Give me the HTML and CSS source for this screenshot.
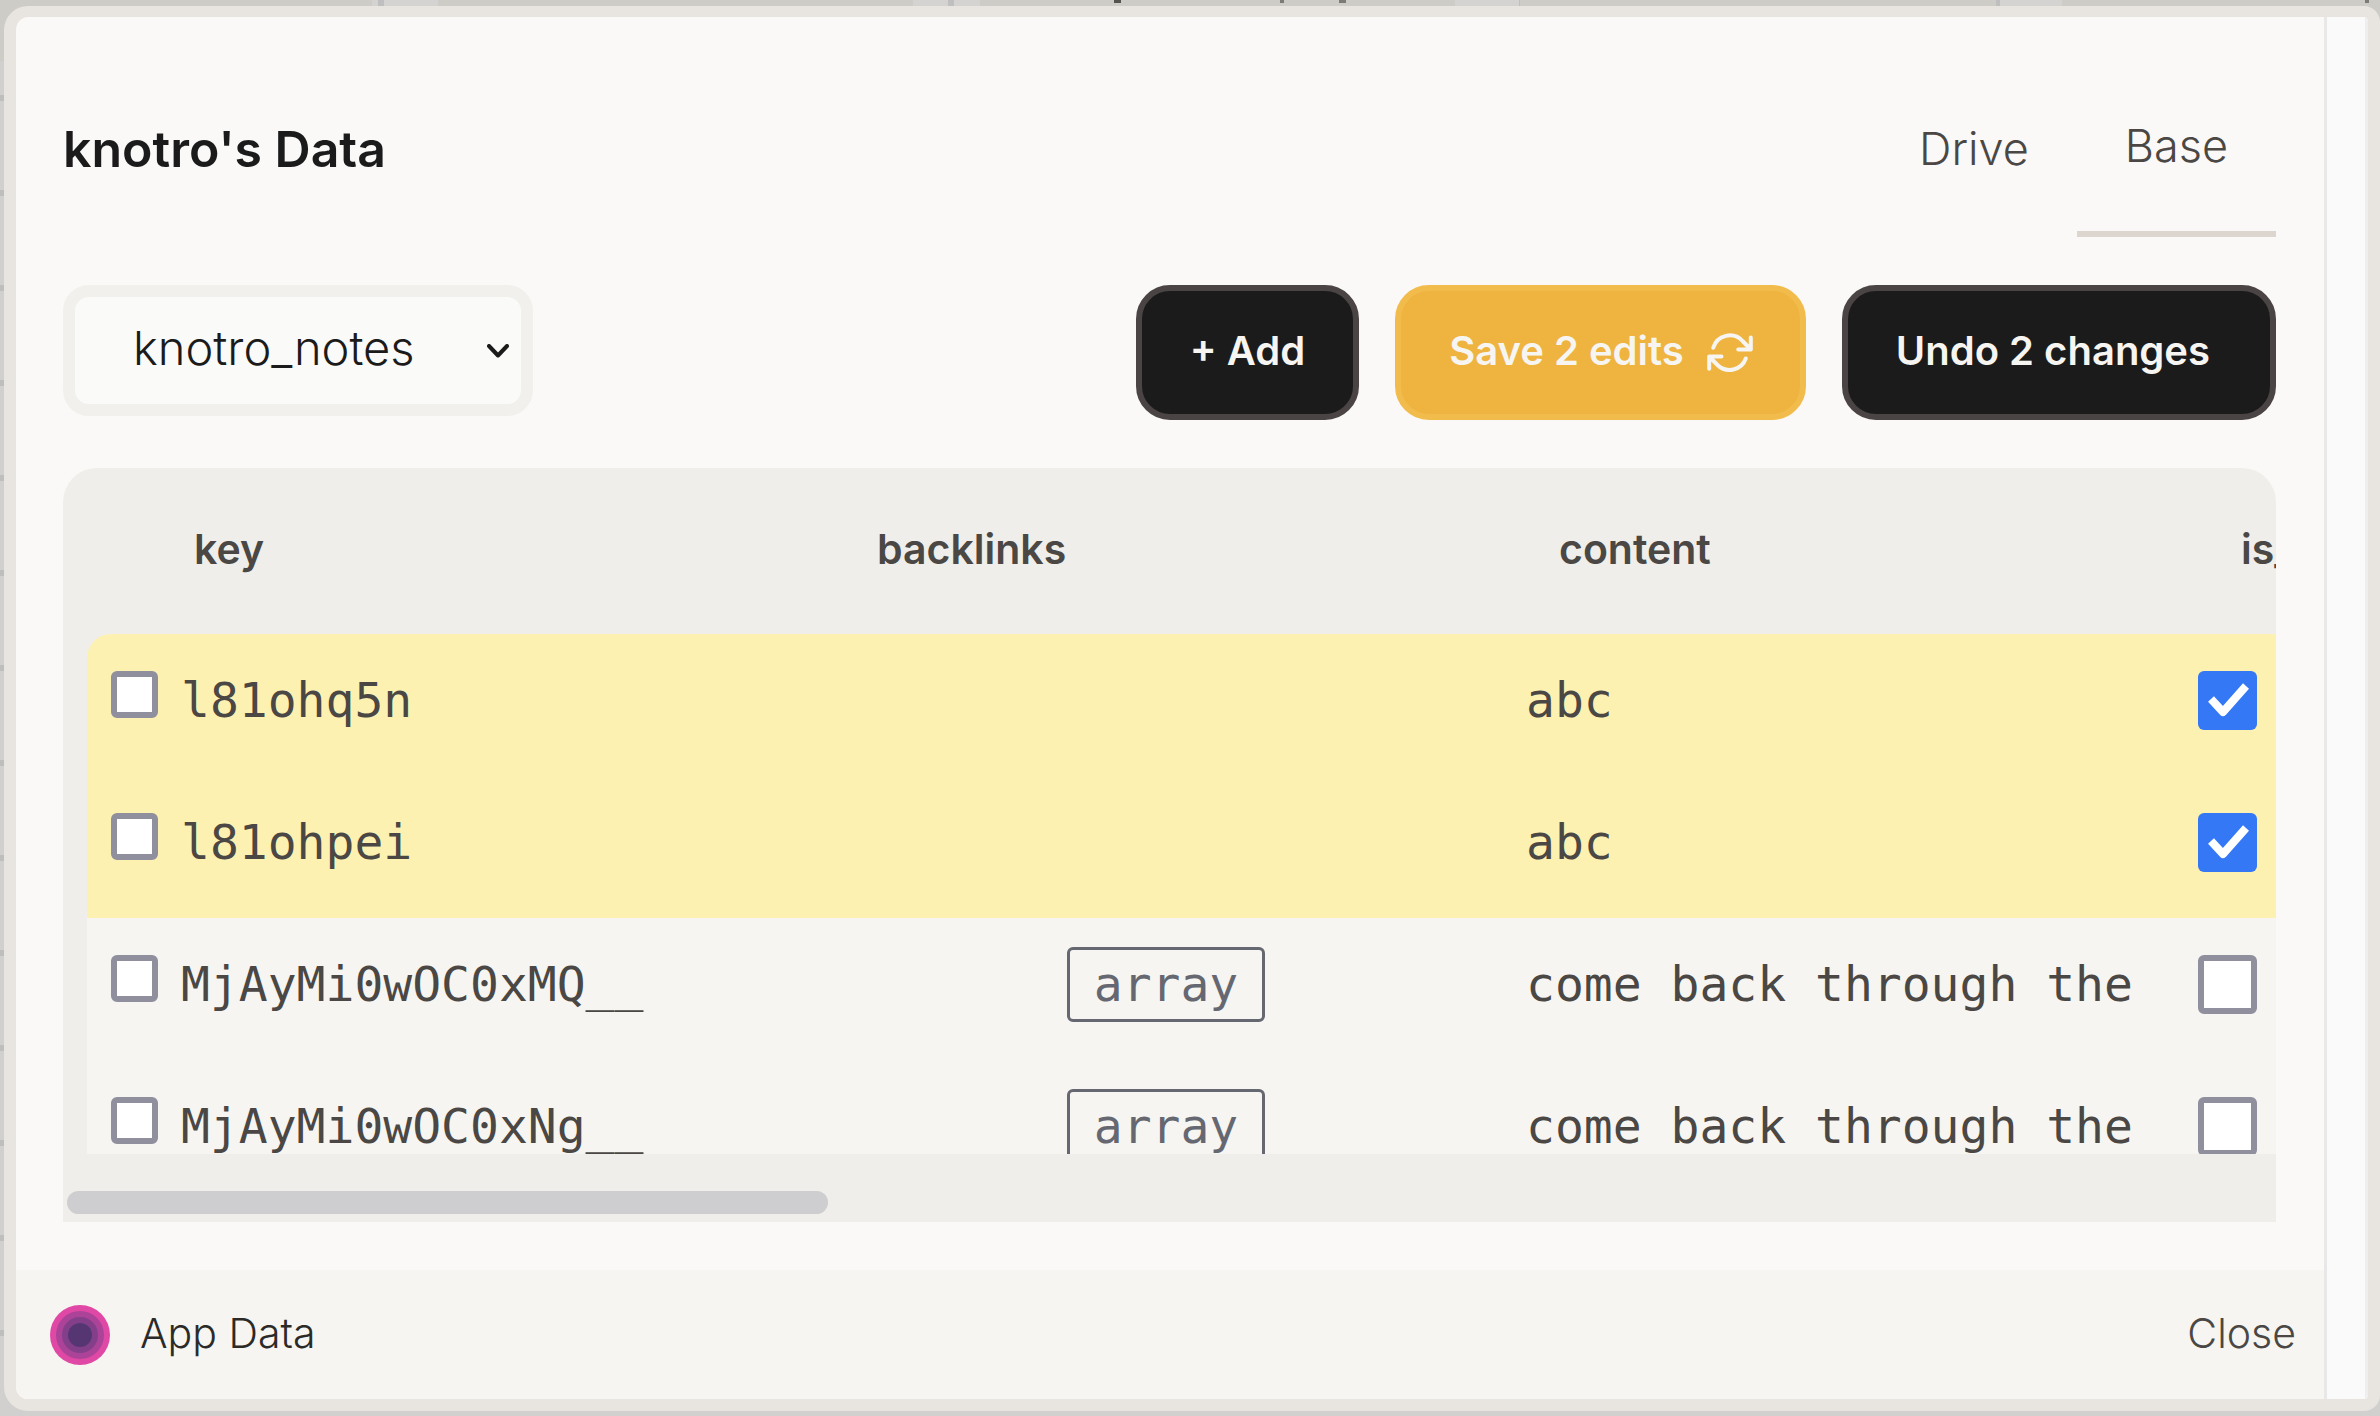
FILE: index.html
```html
<!DOCTYPE html>
<html lang="en">
<head>
<meta charset="utf-8">
<title>App Data</title>
<link rel="stylesheet" href="styles.css">
</head>
<body>
<div class="dialog" role="dialog" aria-label="App Data">
  <div class="panel">
    <main class="content">
      <header class="header">
        <h1 class="title">knotro's Data</h1>
        <nav class="tabs">
          <a class="tab" href="#drive">Drive</a>
          <a class="tab tab-active" href="#base" aria-current="page">Base</a>
        </nav>
      </header>

      <div class="toolbar">
        <div class="picker">
          <select class="picker-select" aria-label="Base">
            <option>knotro_notes</option>
          </select>
          <svg class="picker-arrow" viewBox="0 0 22 14" aria-hidden="true"><path d="M2 2l9 9.500 9-9.500"/></svg>
        </div>
        <div class="actions">
          <button class="button" type="button">+ Add</button>
          <button class="button button-save" type="button">Save 2 edits
            <svg class="button-icon" viewBox="0 0 48 48" aria-hidden="true"><path d="M7.200 18.800A17.300 17.300 0 0 1 36.500 12l8.300 8.500M44.800 8.500v12H32.200M39.800 29.500A17.300 17.300 0 0 1 11.500 36l-8.300-8.500M3.200 39.800V27.500h12.300"/></svg>
          </button>
          <button class="button button-undo" type="button">Undo 2 changes</button>
        </div>
      </div>

      <section class="grid">
        <div class="viewport">
          <table class="table">
            <colgroup><col class="col-pick"><col class="col-key"><col class="col-field"><col class="col-field"><col class="col-field"></colgroup>
            <thead>
              <tr><td></td><th class="th-key" scope="col">key</th><th scope="col">backlinks</th><th scope="col">content</th><th scope="col">is_public</th></tr>
            </thead>
            <tbody>
              <tr class="edited">
                <td class="cell-pick"><input class="pick" type="checkbox" aria-label="Select l81ohq5n"></td>
                <td class="cell-key">l81ohq5n</td><td></td>
                <td class="cell-text"><input class="text" type="text" value="abc" aria-label="content"></td>
                <td class="cell-flag"><input class="flag" type="checkbox" checked aria-label="is_public"></td>
              </tr>
              <tr class="edited">
                <td class="cell-pick"><input class="pick" type="checkbox" aria-label="Select l81ohpei"></td>
                <td class="cell-key">l81ohpei</td><td></td>
                <td class="cell-text"><input class="text" type="text" value="abc" aria-label="content"></td>
                <td class="cell-flag"><input class="flag" type="checkbox" checked aria-label="is_public"></td>
              </tr>
              <tr>
                <td class="cell-pick"><input class="pick" type="checkbox" aria-label="Select MjAyMi0wOC0xMQ__"></td>
                <td class="cell-key">MjAyMi0wOC0xMQ__</td>
                <td class="cell-type"><button class="type" type="button">array</button></td>
                <td class="cell-text"><input class="text" type="text" value="come back through the" aria-label="content"></td>
                <td class="cell-flag"><input class="flag" type="checkbox" aria-label="is_public"></td>
              </tr>
              <tr>
                <td class="cell-pick"><input class="pick" type="checkbox" aria-label="Select MjAyMi0wOC0xNg__"></td>
                <td class="cell-key">MjAyMi0wOC0xNg__</td>
                <td class="cell-type"><button class="type" type="button">array</button></td>
                <td class="cell-text"><input class="text" type="text" value="come back through the" aria-label="content"></td>
                <td class="cell-flag"><input class="flag" type="checkbox" aria-label="is_public"></td>
              </tr>
            </tbody>
          </table>
        </div>
        <div class="scrollbar"><div class="thumb"></div></div>
      </section>
    </main>

    <footer class="footer">
      <div class="brand">
        <svg class="logo" viewBox="0 0 60 60" aria-hidden="true"><circle cx="30" cy="30" r="30" fill="#df48a4"/><circle cx="30" cy="30" r="24" fill="#ab4398"/><circle cx="30" cy="30" r="18" fill="#843f8b"/><circle cx="30" cy="30" r="12" fill="#553672"/></svg>
        <span class="brand-name">App Data</span>
      </div>
      <button class="close" type="button">Close</button>
    </footer>
  </div>
  <div class="gutter"></div>
</div>
</body>
</html>
```

FILE: styles.css
```css
* { box-sizing: border-box; }

body {
  margin: 0;
  height: 100vh;
  padding: 6px 0 5px 4px;
  display: flex;
  overflow: hidden;
  font-family: Inter, "Liberation Sans", sans-serif;
  font-weight: 350;
  color: #4a4744;
  background:
    linear-gradient(#55534f, #55534f) 1114px 0 / 7px 3px no-repeat,
    linear-gradient(#7c7b76, #7c7b76) 1280px 0 / 4px 3px no-repeat,
    linear-gradient(#7c7b76, #7c7b76) 1339px 0 / 7px 3px no-repeat,
    linear-gradient(#7c7b76, #7c7b76) 2365px 0 / 4px 3px no-repeat,
    linear-gradient(#c0bfbf, #c0bfbf) 378px 0 / 6px 6px no-repeat,
    linear-gradient(#c0bfbf, #c0bfbf) 948px 0 / 6px 6px no-repeat,
    linear-gradient(#c0bfbf, #c0bfbf) 1519px 0 / 1px 6px no-repeat,
    linear-gradient(#c0bfbf, #c0bfbf) 1996px 0 / 4px 6px no-repeat,
    linear-gradient(#d4d3d1, #d4d3d1) 372px 0 / 66px 6px no-repeat,
    linear-gradient(#d4d3d1, #d4d3d1) 913px 0 / 67px 6px no-repeat,
    linear-gradient(#d4d3d1, #d4d3d1) 1455px 0 / 64px 6px no-repeat,
    linear-gradient(#d4d3d1, #d4d3d1) 1996px 0 / 66px 6px no-repeat,
    linear-gradient(#cdccc7, #cdccc7) 0 0 / 100% 61px no-repeat,
    repeating-linear-gradient(#d1d0ce 0 89px, #bfbebe 89px 95px) 0 6px;
}

button, select, input { font: inherit; color: inherit; margin: 0; }

.dialog {
  flex: 1;
  min-width: 0;
  display: flex;
  overflow: hidden;
  background: #faf9f7;
  border: 12px solid #e8e4df;
  border-top-width: 11px;
  border-radius: 24px 16px 16px 24px;
}

.panel {
  flex: 1;
  min-width: 0;
  display: flex;
  flex-direction: column;
}

.gutter {
  width: 44px;
  background: #fafafa;
  border: solid #e8e8e8;
  border-width: 0 3px;
  border-right-color: #eeeeee;
}

.content {
  flex: 1;
  min-height: 0;
  padding: 48px 48px 48px 47px;
  display: flex;
  flex-direction: column;
}

.header {
  display: flex;
  justify-content: space-between;
  align-items: center;
  margin-bottom: 48px;
}

.title {
  margin: 0;
  padding-bottom: 4px;
  font-size: 50px;
  line-height: 60px;
  font-weight: 600;
  color: #1c1b1b;
}

.tabs { display: flex; align-items: stretch; }

.tab {
  display: flex;
  align-items: center;
  height: 172px;
  padding: 0 48px 4px;
  font-size: 45px;
  line-height: 60px;
  color: inherit;
  text-decoration: none;
}

.tab-active { border-bottom: 6px solid #dcd6cf; }

.toolbar {
  display: flex;
  justify-content: space-between;
  align-items: flex-start;
  margin-bottom: 48px;
}

.picker { position: relative; width: 470px; }

.picker-select {
  appearance: none;
  width: 100%;
  height: 131px;
  padding: 0 48px 6px 58px;
  border: 12px solid #f1f0ec;
  border-radius: 26px;
  background: #fafaf8;
  color: #1c1b1b;
  font-size: 47px;
}

.picker-arrow {
  position: absolute;
  right: 24px;
  top: 59px;
  width: 22px;
  height: 14px;
  fill: none;
  stroke: #1c1b1b;
  stroke-width: 4;
  stroke-linecap: round;
  stroke-linejoin: round;
  pointer-events: none;
}

.actions { display: flex; gap: 36px; }

.button {
  display: flex;
  align-items: center;
  gap: 22px;
  height: 135px;
  padding: 0 48px 4px;
  border: 6px solid #4a4544;
  border-radius: 34px;
  background: #1c1b1b;
  color: #f6f5f1;
  font-size: 40px;
  font-weight: 600;
  white-space: nowrap;
}

.button-save {
  padding-right: 46px;
  background: #efb340;
  border-color: #f2bc4c;
}

.button-undo { padding-right: 60px; }

.button-icon {
  width: 48px;
  height: 48px;
  margin-top: 4px;
  fill: none;
  stroke: #f6f5f1;
  stroke-width: 4;
  stroke-linecap: round;
  stroke-linejoin: round;
}

.grid {
  flex: 1;
  min-height: 0;
  display: flex;
  flex-direction: column;
  overflow: hidden;
  background: #efeeea;
  border-radius: 34px 34px 0 0;
}

.viewport {
  flex: 1;
  min-height: 0;
  overflow: hidden;
  padding-left: 24px;
}

.table {
  width: 2784px;
  table-layout: fixed;
  border-collapse: separate;
  border-spacing: 0;
}

.col-pick { width: 71px; }
.col-key { width: 667px; }
.col-field { width: 682px; }

.table th {
  height: 166px;
  padding: 0 52px 4px;
  font-size: 41px;
  font-weight: 600;
  text-align: left;
}

.table .th-key { padding-left: 36px; }

.table td { padding: 0; }

tbody td {
  height: 142px;
  background: #f6f5f1;
  font-family: "DejaVu Sans Mono", monospace;
  font-size: 48px;
}

.edited td { background: #fdf1b2; }
.edited:first-child td:first-child { border-top-left-radius: 24px; }

.table .cell-pick { padding: 0 0 22px 24px; }
.table .cell-key { padding: 0 0 10px 23px; }
.table .cell-text { padding: 0 19px 10px; }
.table .cell-flag { padding: 0 0 10px 9px; }
.table .cell-type { padding-bottom: 10px; text-align: center; }

.text {
  display: block;
  width: 100%;
  height: 72px;
  padding: 0;
  border: 0;
  background: none;
}

.pick, .flag {
  appearance: none;
  display: block;
  width: 47px;
  height: 47px;
  border: 6px solid #8f8f9d;
  border-radius: 6px;
  background: #fff;
}

.flag { width: 59px; height: 59px; }

.flag:checked {
  border: 0;
  background: #3478f6 url("data:image/svg+xml,%3Csvg xmlns='http://www.w3.org/2000/svg' viewBox='0 0 59 59'%3E%3Cpath d='M13 28l12 13L48 15' fill='none' stroke='%23fff' stroke-width='8' stroke-linejoin='round'/%3E%3C/svg%3E");
}

.type {
  height: 75px;
  padding: 0 24px;
  border: 3px solid #666871;
  border-radius: 6px;
  background: none;
  color: #666871;
}

.scrollbar { padding: 37px 4px 8px; }

.thumb {
  width: 761px;
  height: 23px;
  border-radius: 12px;
  background: #cecdd0;
}

.footer {
  display: flex;
  justify-content: space-between;
  align-items: center;
  height: 129px;
  padding: 0 28px 0 34px;
  background: #f6f5f1;
  font-size: 41px;
}

.brand {
  display: flex;
  align-items: center;
  gap: 30px;
  color: #2b2a28;
}

.brand-name { padding-bottom: 4px; }

.logo { width: 60px; height: 60px; }

.close { padding: 0 0 4px; border: 0; background: none; }
```
